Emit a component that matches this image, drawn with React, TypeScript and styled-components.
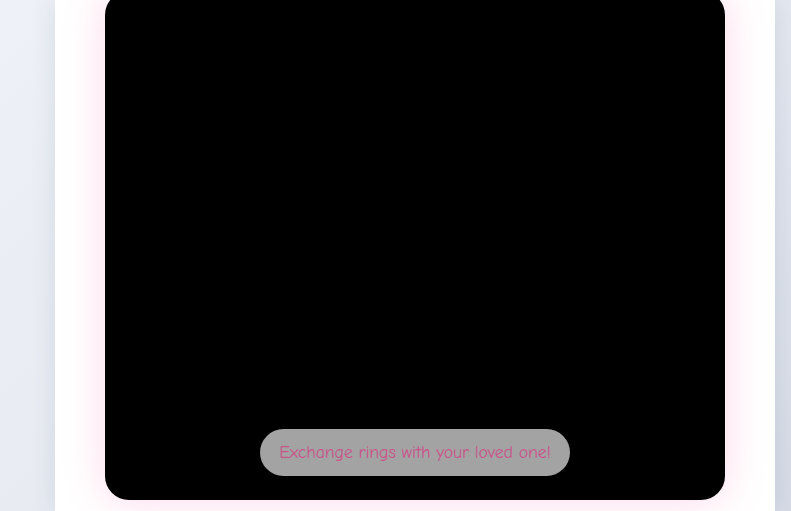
import React from "react";
import styled, { createGlobalStyle } from "styled-components";

const Global = createGlobalStyle`
  html, body { margin: 0; padding: 0; height: 100%; overflow: hidden; }
  body {
    background: linear-gradient(135deg, #eef1f7 0%, #e4e8f0 60%, #d6dbe6 100%);
    font-family: "Open Sans", "Liberation Sans", sans-serif;
  }
`;

const Page = styled.div`
  display: flex;
  padding-left: 55px;
  height: 511px;
`;

const Card = styled.div`
  width: 720px;
  background: #ffffff;
  box-shadow: 0 0 24px rgba(60, 70, 100, 0.12);
  padding: 0 50px;
  box-sizing: border-box;
  display: flex;
  flex-direction: column;
`;

const Stage = styled.div`
  margin-top: -9px;
  height: 509px;
  background: #000;
  border-radius: 24px;
  box-shadow: 0 0 40px rgba(255, 110, 175, 0.28);
  display: flex;
  flex-direction: column;
  justify-content: flex-end;
  align-items: center;
  padding-bottom: 24px;
  box-sizing: border-box;
`;

const Caption = styled.div`
  height: 47px;
  padding: 0 19px;
  box-sizing: border-box;
  display: flex;
  align-items: center;
  border-radius: 24px;
  background: rgba(255, 255, 255, 0.64);
  color: #c9548b;
  font-family: "Comic Sans MS", "Comic Neue", "Lato", "Open Sans", sans-serif;
  font-size: 18px;
  letter-spacing: -0.2px;
`;

export default function App() {
  return (
    <>
      <Global />
      <Page>
        <Card>
          <Stage>
            <Caption>Exchange rings with your loved one!</Caption>
          </Stage>
        </Card>
      </Page>
    </>
  );
}
